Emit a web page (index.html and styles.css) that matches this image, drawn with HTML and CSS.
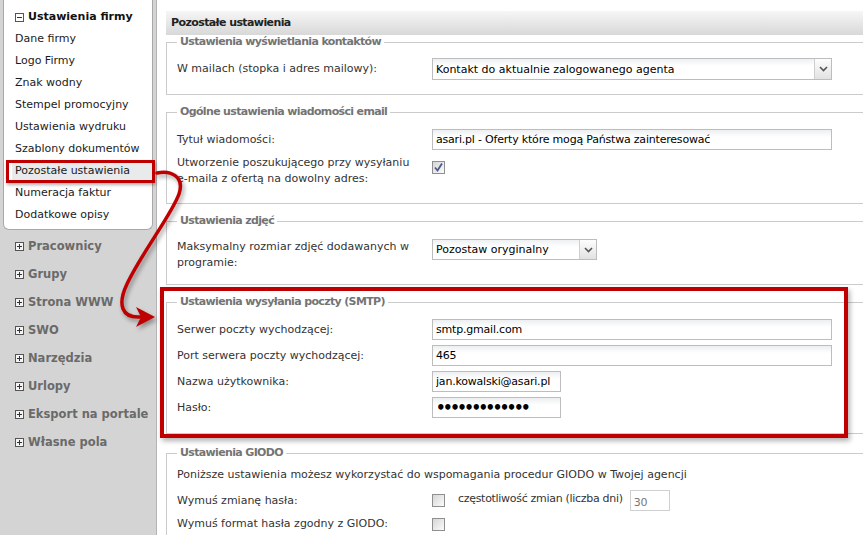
FILE: index.html
```html
<!DOCTYPE html>
<html lang="pl">
<head>
<meta charset="utf-8">
<title>Pozostałe ustawienia</title>
<link rel="stylesheet" href="styles.css">
</head>
<body>
<div class="page">
  <aside class="sidebar">
    <div class="panel">
      <div class="group-head">
        <svg class="tog" width="9" height="9" viewBox="0 0 9 9"><rect x="0.5" y="0.5" width="8" height="8" fill="#fff" stroke="#555"/><path d="M2 4.5H7" stroke="#333" stroke-width="1"/></svg>
        <span>Ustawienia firmy</span>
      </div>
      <ul class="sub">
        <li>Dane firmy</li>
        <li>Logo Firmy</li>
        <li>Znak wodny</li>
        <li>Stempel promocyjny</li>
        <li>Ustawienia wydruku</li>
        <li>Szablony dokumentów</li>
        <li class="active">Pozostałe ustawienia</li>
        <li>Numeracja faktur</li>
        <li>Dodatkowe opisy</li>
      </ul>
    </div>
    <ul class="groups">
      <li><svg class="tog" width="9" height="9" viewBox="0 0 9 9"><rect x="0.5" y="0.5" width="8" height="8" fill="#f4f4f4" stroke="#555"/><path d="M2 4.5H7M4.5 2V7" stroke="#333"/></svg>Pracownicy</li>
      <li><svg class="tog" width="9" height="9" viewBox="0 0 9 9"><rect x="0.5" y="0.5" width="8" height="8" fill="#f4f4f4" stroke="#555"/><path d="M2 4.5H7M4.5 2V7" stroke="#333"/></svg>Grupy</li>
      <li><svg class="tog" width="9" height="9" viewBox="0 0 9 9"><rect x="0.5" y="0.5" width="8" height="8" fill="#f4f4f4" stroke="#555"/><path d="M2 4.5H7M4.5 2V7" stroke="#333"/></svg>Strona WWW</li>
      <li><svg class="tog" width="9" height="9" viewBox="0 0 9 9"><rect x="0.5" y="0.5" width="8" height="8" fill="#f4f4f4" stroke="#555"/><path d="M2 4.5H7M4.5 2V7" stroke="#333"/></svg>SWO</li>
      <li><svg class="tog" width="9" height="9" viewBox="0 0 9 9"><rect x="0.5" y="0.5" width="8" height="8" fill="#f4f4f4" stroke="#555"/><path d="M2 4.5H7M4.5 2V7" stroke="#333"/></svg>Narzędzia</li>
      <li><svg class="tog" width="9" height="9" viewBox="0 0 9 9"><rect x="0.5" y="0.5" width="8" height="8" fill="#f4f4f4" stroke="#555"/><path d="M2 4.5H7M4.5 2V7" stroke="#333"/></svg>Urlopy</li>
      <li><svg class="tog" width="9" height="9" viewBox="0 0 9 9"><rect x="0.5" y="0.5" width="8" height="8" fill="#f4f4f4" stroke="#555"/><path d="M2 4.5H7M4.5 2V7" stroke="#333"/></svg>Eksport na portale</li>
      <li><svg class="tog" width="9" height="9" viewBox="0 0 9 9"><rect x="0.5" y="0.5" width="8" height="8" fill="#f4f4f4" stroke="#555"/><path d="M2 4.5H7M4.5 2V7" stroke="#333"/></svg>Własne pola</li>
    </ul>
  </aside>

  <main class="main">
    <div class="title">Pozostałe ustawienia</div>

    <fieldset class="fs fs-contacts">
      <legend>Ustawienia wyświetlania kontaktów</legend>
      <div class="row">
        <label>W mailach (stopka i adres mailowy):</label>
        <div class="select wide"><span class="val">Kontakt do aktualnie zalogowanego agenta</span><span class="btn"><svg width="9" height="6" viewBox="0 0 9 6"><path d="M1 1L4.5 4.5L8 1" fill="none" stroke="#555" stroke-width="1.6"/></svg></span></div>
      </div>
    </fieldset>

    <fieldset class="fs fs-email">
      <legend>Ogólne ustawienia wiadomości email</legend>
      <div class="row">
        <label>Tytuł wiadomości:</label>
        <input class="inp wide" type="text" value="asari.pl - Oferty które mogą Państwa zainteresować">
      </div>
      <div class="row top">
        <label>Utworzenie poszukującego przy wysyłaniu e-maila z ofertą na dowolny adres:</label>
        <span class="cb checked"><svg width="11" height="11" viewBox="0 0 11 11"><path d="M2 5.5L4.5 8.5L9 1.5" fill="none" stroke="#4b5b8c" stroke-width="1.8"/></svg></span>
      </div>
    </fieldset>

    <fieldset class="fs fs-photo">
      <legend>Ustawienia zdjęć</legend>
      <div class="row top">
        <label>Maksymalny rozmiar zdjęć dodawanych w programie:</label>
        <div class="select mid"><span class="val">Pozostaw oryginalny</span><span class="btn"><svg width="9" height="6" viewBox="0 0 9 6"><path d="M1 1L4.5 4.5L8 1" fill="none" stroke="#555" stroke-width="1.6"/></svg></span></div>
      </div>
    </fieldset>

    <fieldset class="fs fs-smtp">
      <legend>Ustawienia wysyłania poczty (SMTP)</legend>
      <div class="row">
        <label>Serwer poczty wychodzącej:</label>
        <input class="inp wide" type="text" value="smtp.gmail.com">
      </div>
      <div class="row">
        <label>Port serwera poczty wychodzącej:</label>
        <input class="inp wide" type="text" value="465">
      </div>
      <div class="row">
        <label>Nazwa użytkownika:</label>
        <input class="inp short" type="text" value="jan.kowalski@asari.pl">
      </div>
      <div class="row">
        <label>Hasło:</label>
        <span class="inp short pass">•••••••••••••</span>
      </div>
    </fieldset>

    <fieldset class="fs fs-giodo">
      <legend>Ustawienia GIODO</legend>
      <p class="note">Poniższe ustawienia możesz wykorzystać do wspomagania procedur GIODO w Twojej agencji</p>
      <div class="row">
        <label>Wymuś zmianę hasła:</label>
        <div class="inline">
          <span class="cb"></span>
          <span class="freq">częstotliwość zmian (liczba dni)</span>
          <input class="inp days" type="text" value="30" disabled>
        </div>
      </div>
      <div class="row r-last">
        <label>Wymuś format hasła zgodny z GIODO:</label>
        <span class="cb"></span>
      </div>
    </fieldset>
  </main>

  <div class="smtp-mark"></div>
  <svg class="arrow" width="200" height="340" viewBox="0 0 200 340">
    <path d="M157,173 C170,170 185,176 179,194 C172,214 141,254 127,284 C117,305 122,318 140,317" fill="none" stroke="#c00000" stroke-width="3.5" stroke-linecap="round"/>
    <path d="M155,317 L136,307 L141,317 L136,327 Z" fill="#c00000"/>
  </svg>
</div>
</body>
</html>
```

FILE: styles.css
```css
html, body {
  margin: 0;
  padding: 0;
  overflow: hidden;
}
body {
  font-family: "DejaVu Sans", Verdana, sans-serif;
  font-size: 11px;
  color: #333;
  background: #fff;
}
.page {
  position: relative;
  display: flex;
  width: 900px;
  height: 535px;
}

/* sidebar */
.sidebar {
  width: 150px;
  flex: none;
  padding: 0 3px;
  background: #d4d4d4;
  border-right: 1px solid #b4b4b4;
}
.panel {
  background: #fff;
  border: 1px solid #a8a8a8;
  border-top: none;
  border-radius: 0 0 6px 6px;
  padding: 9px 0 3px 11px;
}
.group-head {
  display: flex;
  align-items: center;
  gap: 4px;
  line-height: 16px;
  font-weight: bold;
  color: #111;
}
.tog { flex: none; }
.sub {
  list-style: none;
  margin: 3px 0 0;
  padding: 0;
}
.sub li {
  line-height: 22px;
  color: #1b1b1b;
  white-space: nowrap;
}
.sub li.active {
  position: relative;
  margin-left: -3px;
  padding-left: 3px;
  background: #e9eaec;
}
.sub li.active::after {
  content: "";
  position: absolute;
  left: -6px;
  right: -3px;
  top: 0;
  bottom: -1px;
  border: 3px solid #c00000;
  box-shadow: 1px 2px 3px rgba(0,0,0,.3);
}
.groups {
  list-style: none;
  margin: 0;
  padding: 2px 0 0 12px;
}
.groups li {
  display: flex;
  align-items: center;
  gap: 4px;
  line-height: 28px;
  font-size: 11.5px;
  font-weight: bold;
  color: #6a6a6a;
  white-space: nowrap;
}

/* main */
.main {
  flex: 1;
  padding: 11px 0 0 9px;
}
.title {
  height: 24px;
  line-height: 24px;
  padding-left: 5px;
  background: linear-gradient(#f6f6f6, #d8d8d8);
  font-weight: bold;
  letter-spacing: -0.6px;
  color: #222;
}
.fs {
  margin: 0 0 10px;
  border: 1px solid #cbcbcb;
  padding: 9px 0 14px 10px;
}
.fs legend {
  padding: 0 3px;
  line-height: 14px;
  font-weight: bold;
  letter-spacing: -0.65px;
  color: #747474;
}
.fs-email { padding-top: 10px; padding-bottom: 16px; }
.fs-photo { padding-top: 11px; padding-bottom: 13px; }
.fs-smtp { margin-bottom: 12px; padding-top: 10px; padding-bottom: 15px; }
.fs-giodo { padding-top: 7px; }

.row {
  display: grid;
  grid-template-columns: 255px auto;
  align-items: center;
  justify-items: start;
}
.row + .row { margin-top: 5px; }
.row.top { align-items: start; }
.row label {
  line-height: 16px;
  padding-right: 20px;
}
.note {
  margin: 0 0 7px;
  line-height: 16px;
}

/* controls */
.inp {
  box-sizing: border-box;
  height: 21px;
  margin: 0;
  padding: 0 3px;
  border: 1px solid #bdbdbd;
  background: linear-gradient(#eceef0, #fff 7px);
  font-family: "DejaVu Sans", Verdana, sans-serif;
  font-size: 11px;
  letter-spacing: -0.2px;
  color: #000;
  outline: none;
}
.inp.wide { width: 400px; }
.inp.short { width: 129px; }
.pass {
  display: flex;
  align-items: center;
  font-size: 15px;
  letter-spacing: -2.5px;
  padding-left: 3px;
  font-weight: bold;
}
.inp.days {
  width: 40px;
  height: 21px;
  color: #777;
  background: #fff;
  border-color: #d0d0d0;
  padding-top: 3px;
}

.select {
  box-sizing: border-box;
  display: flex;
  align-items: center;
  height: 22px;
  border: 1px solid #bdbdbd;
  background: linear-gradient(#eef0f2, #fff 7px);
  font-size: 11px;
  color: #000;
}
.select.wide { width: 400px; }
.select.mid { width: 165px; height: 21px; }
.select .val {
  flex: 1;
  padding-left: 3px;
  white-space: nowrap;
  overflow: hidden;
}
.select .btn {
  flex: none;
  align-self: stretch;
  width: 16px;
  display: flex;
  align-items: center;
  justify-content: center;
  border-left: 1px solid #cfcfcf;
  background: linear-gradient(#fdfdfd, #e2e2e2);
}

.cb {
  box-sizing: border-box;
  display: inline-flex;
  align-items: center;
  justify-content: center;
  width: 13px;
  height: 13px;
  border: 1px solid #8f8f8f;
  background: linear-gradient(135deg, #d6d6d6, #fbfbfb);
}
.row.top .cb { margin-top: 6px; }
.inline {
  display: flex;
  align-items: center;
}
.freq {
  margin-left: 13px;
  margin-right: 7px;
  margin-top: -5px;
  letter-spacing: -0.3px;
}

/* annotations */
.smtp-mark {
  position: absolute;
  left: 160px;
  top: 287px;
  width: 688px;
  height: 151px;
  box-sizing: border-box;
  border: 4px solid #c00000;
  box-shadow: 2px 3px 5px rgba(0,0,0,.3);
  pointer-events: none;
}
.arrow {
  position: absolute;
  left: 0;
  top: 0;
  pointer-events: none;
  filter: drop-shadow(2px 3px 2px rgba(0,0,0,.35));
}
```
